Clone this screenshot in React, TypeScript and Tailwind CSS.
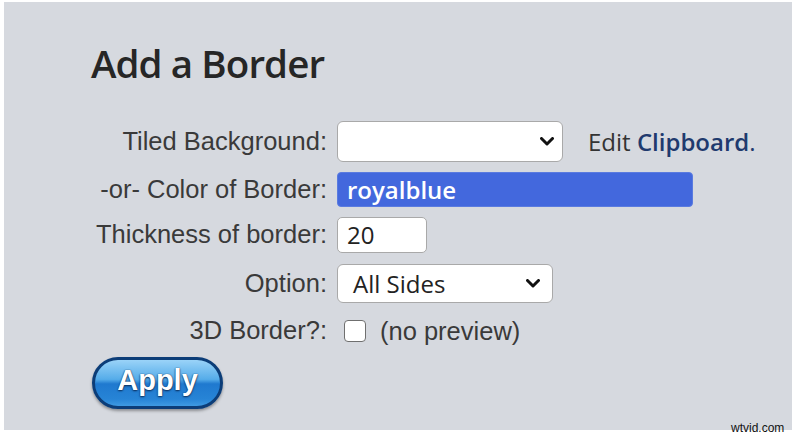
import React from "react"

const labelCls =
  "text-right text-[25.5px] text-[#3a3a3a] font-['Liberation_Sans',Arial,sans-serif] leading-none"

function Chevron() {
  return (
    <svg width="14" height="9" viewBox="0 0 14 9" className="shrink-0">
      <polyline points="1.5,1.5 7,7 12.5,1.5" fill="none" stroke="#111" strokeWidth="3" strokeLinecap="round" strokeLinejoin="round" />
    </svg>
  )
}

function Row({ label, children, h }: { label: string; children: React.ReactNode; h: string }) {
  return (
    <div className={`flex items-center ${h}`}>
      <div className={`w-[239px] ${labelCls}`}>{label}</div>
      <div className="ml-[10px] flex items-center">{children}</div>
    </div>
  )
}

export default function App() {
  return (
    <div className="w-[800px] h-[438px] bg-white overflow-hidden relative font-['Open_Sans',sans-serif]">
      <div className="ml-[4px] mt-[2px] w-[788px] h-[428px] bg-[#d6d9df] pt-[41px] pl-[84px]">
        {/* Heading */}
        <h1 className="text-[38.5px] leading-[40px] font-semibold text-[#262626] tracking-[-0.9px] ml-[3px]">
          Add a Border
        </h1>

        <div className="mt-[38px] flex flex-col">
          <Row label="Tiled Background:" h="h-[41px]">
            <div className="w-[226px] h-[41px] bg-white border border-[#a9a9a9] rounded-[6px] flex items-center justify-end pr-[8px]">
              <Chevron />
            </div>
            <span className="ml-[25px] text-[24px] text-[#333]">
              Edit <span className="text-[#1f3a6e] font-semibold">Clipboard</span>
              <span className="text-[#1f3a6e]">.</span>
            </span>
          </Row>

          <div className="mt-[10px]">
            <Row label="-or- Color of Border:" h="h-[35px]">
              <div className="w-[356px] h-[35px] bg-[#4368dd] border border-[#5a7be0] rounded-[4px] flex items-center pl-[9px] text-white text-[24px] font-semibold">
                royalblue
              </div>
            </Row>
          </div>

          <div className="mt-[10px]">
            <Row label="Thickness of border:" h="h-[36px]">
              <div className="w-[90px] h-[36px] bg-white border border-[#a9a9a9] rounded-[5px] flex items-center pl-[9px] text-[24px] text-[#222] font-medium">
                20
              </div>
            </Row>
          </div>

          <div className="mt-[11px]">
            <Row label="Option:" h="h-[39px]">
              <div className="w-[216px] h-[39px] bg-white border border-[#a9a9a9] rounded-[6px] flex items-center justify-between pl-[15px] pr-[12px] text-[24px] text-[#222] font-medium">
                <span>All Sides</span>
                <Chevron />
              </div>
            </Row>
          </div>

          <div className="mt-[8px]">
            <Row label="3D Border?:" h="h-[40px]">
              <div className="ml-[7px] w-[22px] h-[22px] bg-white border-[1.5px] border-[#6f6f6f] rounded-[4px]" />
              <span className="ml-[14px] text-[25.5px] text-[#3a3a3a] font-['Liberation_Sans',Arial,sans-serif]">
                (no preview)
              </span>
            </Row>
          </div>

          <div className="mt-[6px] ml-[4px]">
            <div className="relative w-[131px] h-[52px] rounded-full border-[3px] border-[#0c3d78] bg-[linear-gradient(to_bottom,#9ad3f8_0%,#55ace9_42%,#1f79cf_52%,#2784d6_85%,#3f9ae2_100%)] shadow-[0_2px_3px_rgba(0,0,0,0.35)] flex items-center justify-center">
              <span className="text-white text-[29px] font-bold font-['Liberation_Sans',Arial,sans-serif] [text-shadow:0_1px_2px_#0a2a55,0_0_1px_#0a2a55] -mt-[4px]">
                Apply
              </span>
            </div>
          </div>
        </div>
      </div>

      <span className="absolute left-[731px] top-[422px] text-[12px] leading-none text-[#111] font-['Liberation_Sans',Arial,sans-serif]">
        wtvid.com
      </span>
    </div>
  )
}
